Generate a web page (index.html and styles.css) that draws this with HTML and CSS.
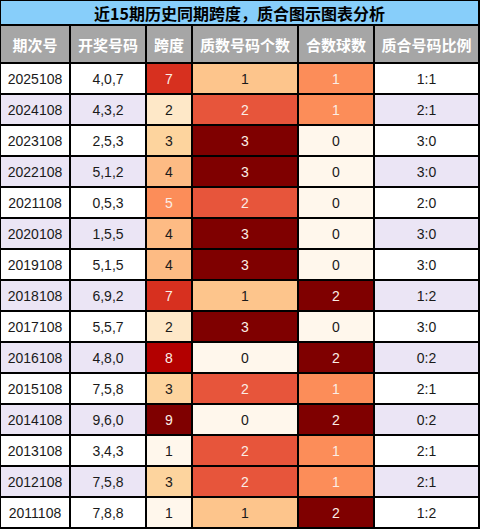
FILE: index.html
```html
<!DOCTYPE html>
<html lang="zh">
<head>
<meta charset="utf-8">
<title>近15期历史同期跨度，质合图示图表分析</title>
<link rel="stylesheet" href="styles.css">
</head>
<body>
<div class="table">
  <div class="title">近15期历史同期跨度，质合图示图表分析</div>
  <div class="th">期次号</div><div class="th">开奖号码</div><div class="th">跨度</div><div class="th">质数号码个数</div><div class="th">合数球数</div><div class="th">质合号码比例</div>

  <div class="td w">2025108</div><div class="td w">4,0,7</div><div class="td s7">7</div><div class="td p1">1</div><div class="td h1">1</div><div class="td w">1:1</div>
  <div class="td l">2024108</div><div class="td l">4,3,2</div><div class="td s2">2</div><div class="td p2">2</div><div class="td h1">1</div><div class="td l">2:1</div>
  <div class="td w">2023108</div><div class="td w">2,5,3</div><div class="td s3">3</div><div class="td p3">3</div><div class="td h0">0</div><div class="td w">3:0</div>
  <div class="td l">2022108</div><div class="td l">5,1,2</div><div class="td s4">4</div><div class="td p3">3</div><div class="td h0">0</div><div class="td l">3:0</div>
  <div class="td w">2021108</div><div class="td w">0,5,3</div><div class="td s5">5</div><div class="td p2">2</div><div class="td h0">0</div><div class="td w">2:0</div>
  <div class="td l">2020108</div><div class="td l">1,5,5</div><div class="td s4">4</div><div class="td p3">3</div><div class="td h0">0</div><div class="td l">3:0</div>
  <div class="td w">2019108</div><div class="td w">5,1,5</div><div class="td s4">4</div><div class="td p3">3</div><div class="td h0">0</div><div class="td w">3:0</div>
  <div class="td l">2018108</div><div class="td l">6,9,2</div><div class="td s7">7</div><div class="td p1">1</div><div class="td h2">2</div><div class="td l">1:2</div>
  <div class="td w">2017108</div><div class="td w">5,5,7</div><div class="td s2">2</div><div class="td p3">3</div><div class="td h0">0</div><div class="td w">3:0</div>
  <div class="td l">2016108</div><div class="td l">4,8,0</div><div class="td s8">8</div><div class="td p0">0</div><div class="td h2">2</div><div class="td l">0:2</div>
  <div class="td w">2015108</div><div class="td w">7,5,8</div><div class="td s3">3</div><div class="td p2">2</div><div class="td h1">1</div><div class="td w">2:1</div>
  <div class="td l">2014108</div><div class="td l">9,6,0</div><div class="td s9">9</div><div class="td p0">0</div><div class="td h2">2</div><div class="td l">0:2</div>
  <div class="td w">2013108</div><div class="td w">3,4,3</div><div class="td s1">1</div><div class="td p2">2</div><div class="td h1">1</div><div class="td w">2:1</div>
  <div class="td l">2012108</div><div class="td l">7,5,8</div><div class="td s3">3</div><div class="td p2">2</div><div class="td h1">1</div><div class="td l">2:1</div>
  <div class="td w">2011108</div><div class="td w">7,8,8</div><div class="td s1">1</div><div class="td p1">1</div><div class="td h2">2</div><div class="td w">1:2</div>
</div>
</body>
</html>
```
FILE: styles.css
```css
html, body {
  margin: 0;
  padding: 0;
  background: #fff;
}
.table {
  width: 480px;
  height: 529px;
  box-sizing: border-box;
  display: grid;
  grid-template-columns: 68px 74px 44px 104px 74px 103px;
  grid-template-rows: 23px 36px repeat(15, 29px);
  gap: 2px;
  padding: 1px 2px 2px 1px;
  background: #000;
  font-family: "Liberation Sans", "Noto Sans CJK SC", sans-serif;
}
.title {
  grid-column: 1 / -1;
  background: #87cefa;
  display: flex;
  align-items: center;
  justify-content: center;
  font-family: "Noto Sans CJK SC", sans-serif;
  font-weight: bold;
  font-size: 16px;
  color: #000;
}
.th {
  background: #a6a6a6;
  color: #fff;
  display: flex;
  align-items: center;
  justify-content: center;
  font-family: "Noto Sans CJK SC", sans-serif;
  font-weight: bold;
  font-size: 15px;
}
.td {
  display: flex;
  align-items: center;
  justify-content: center;
  font-size: 14px;
  color: #1a1a1a;
}
.w { background: #ffffff; }
.l { background: #ebe5f5; }

.s1 { background: #fff7ec; }
.s2 { background: #fee8c8; }
.s3 { background: #fdd49e; }
.s4 { background: #fdbb84; }
.s5 { background: #fc8d59; color: #fbeee6; }
.s6 { background: #ef6548; color: #fbeee6; }
.s7 { background: #d7301f; color: #fbeee6; }
.s8 { background: #b30000; color: #fbeee6; }
.s9 { background: #7f0000; color: #fbeee6; }

.p0 { background: #fff7ec; }
.p1 { background: #fdc58c; }
.p2 { background: #e7553b; color: #fbeee6; }
.p3 { background: #7f0000; color: #fbeee6; }

.h0 { background: #fff7ec; }
.h1 { background: #fc8d59; color: #fbeee6; }
.h2 { background: #7f0000; color: #fbeee6; }
```
